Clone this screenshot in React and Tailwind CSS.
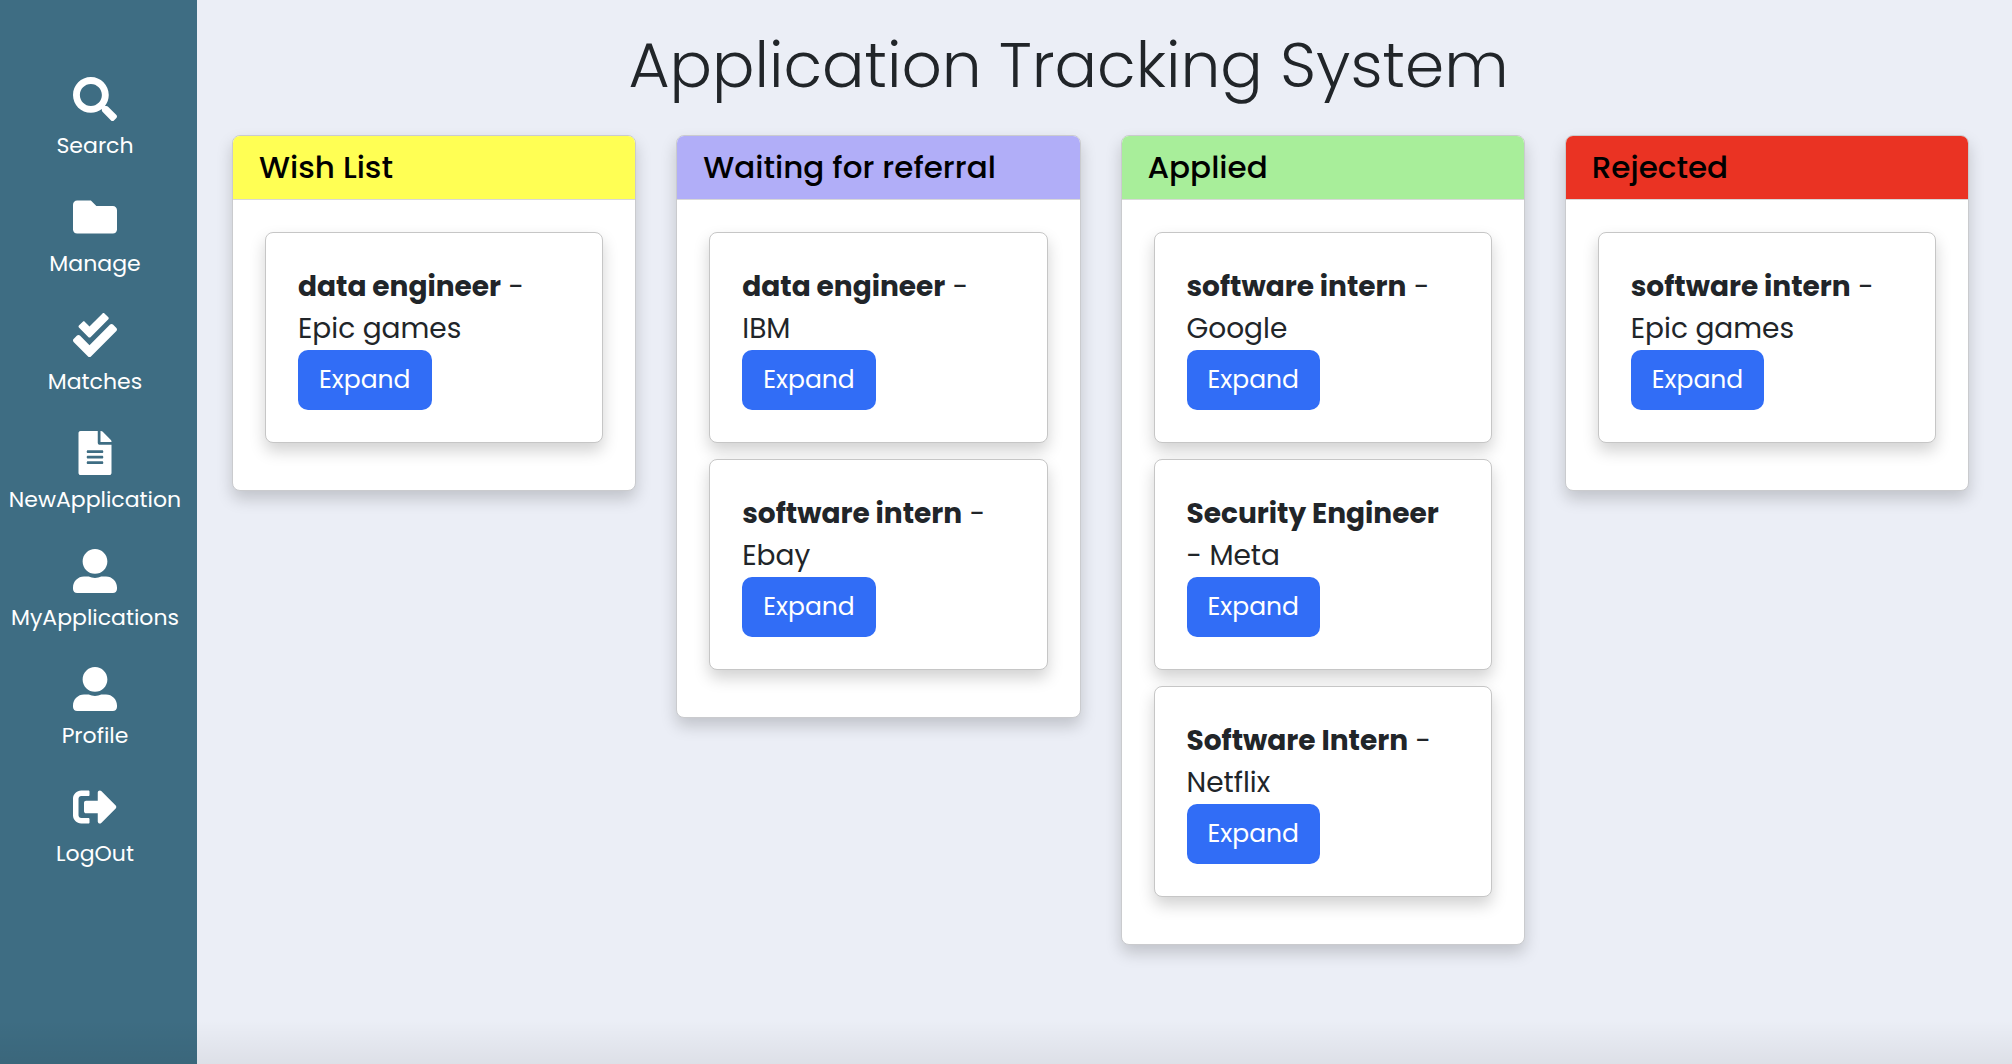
import {
  FaSearch,
  FaFolder,
  FaCheckDouble,
  FaFileAlt,
  FaUserAlt,
  FaSignOutAlt,
} from "react-icons/fa";

const navItems = [
  { label: "Search", icon: FaSearch },
  { label: "Manage", icon: FaFolder },
  { label: "Matches", icon: FaCheckDouble },
  { label: "NewApplication", icon: FaFileAlt },
  { label: "MyApplications", icon: FaUserAlt },
  { label: "Profile", icon: FaUserAlt },
  { label: "LogOut", icon: FaSignOutAlt },
];

const columns = [
  {
    title: "Wish List",
    color: "bg-[#ffff54]",
    jobs: [{ role: "data engineer", company: "Epic games" }],
  },
  {
    title: "Waiting for referral",
    color: "bg-[#b1aef8]",
    jobs: [
      { role: "data engineer", company: "IBM" },
      { role: "software intern", company: "Ebay" },
    ],
  },
  {
    title: "Applied",
    color: "bg-[#a8ee9a]",
    jobs: [
      { role: "software intern", company: "Google" },
      { role: "Security Engineer", company: "Meta" },
      { role: "Software Intern", company: "Netflix" },
    ],
  },
  {
    title: "Rejected",
    color: "bg-[#ea3323]",
    jobs: [{ role: "software intern", company: "Epic games" }],
  },
];

function Sidebar() {
  return (
    <nav className="w-[197px] shrink-0 bg-[#3e6d83] pt-[77px] pr-[7px]">
      <ul className="flex flex-col gap-9">
        {navItems.map(({ label, icon: Icon }) => (
          <li key={label}>
            <a href="#" className="flex flex-col items-center gap-3 text-white">
              <Icon className="size-11" />
              <span className="text-[22px] leading-[26px]">{label}</span>
            </a>
          </li>
        ))}
      </ul>
    </nav>
  );
}

function JobCard({ role, company }) {
  return (
    <article className="rounded-lg border border-[#c6c6c6] bg-white px-8 pt-[33px] pb-8 shadow-[0_8px_16px_rgba(0,0,0,0.18)]">
      <p className="text-[28px] leading-[42px]">
        <strong className="font-bold">{role}</strong> - {company}
      </p>
      <button
        type="button"
        className="block h-[60px] rounded-[10px] bg-[#316df6] px-[21px] text-[25px] text-white"
      >
        Expand
      </button>
    </article>
  );
}

function Column({ title, color, jobs }) {
  return (
    <section className="rounded-lg border border-[#cacbce] bg-white shadow-[0_8px_16px_rgba(0,0,0,0.18)]">
      <h2
        className={`rounded-t-[7px] border-b border-[#d8d8d8] px-[26px] py-3 text-[31px] leading-[39px] font-medium text-black ${color}`}
      >
        {title}
      </h2>
      <div className="flex flex-col gap-4 px-8 pt-8 pb-[47px]">
        {jobs.map((job) => (
          <JobCard key={job.role + job.company} {...job} />
        ))}
      </div>
    </section>
  );
}

export default function App() {
  return (
    <div className="relative flex min-h-screen bg-[#ebeef6] font-[Poppins,Inter,sans-serif] text-[#212529]">
      <Sidebar />
      <main className="flex-1 pt-5 pr-[43px] pb-16 pl-[35px]">
        <h1 className="mb-6 pr-16 text-center text-[63px] leading-[91px] font-light">
          Application Tracking System
        </h1>
        <div className="grid grid-cols-4 items-start gap-10">
          {columns.map((column) => (
            <Column key={column.title} {...column} />
          ))}
        </div>
      </main>
      <div className="pointer-events-none absolute inset-x-0 bottom-0 h-11 bg-linear-to-t from-black/6 to-transparent" />
    </div>
  );
}
